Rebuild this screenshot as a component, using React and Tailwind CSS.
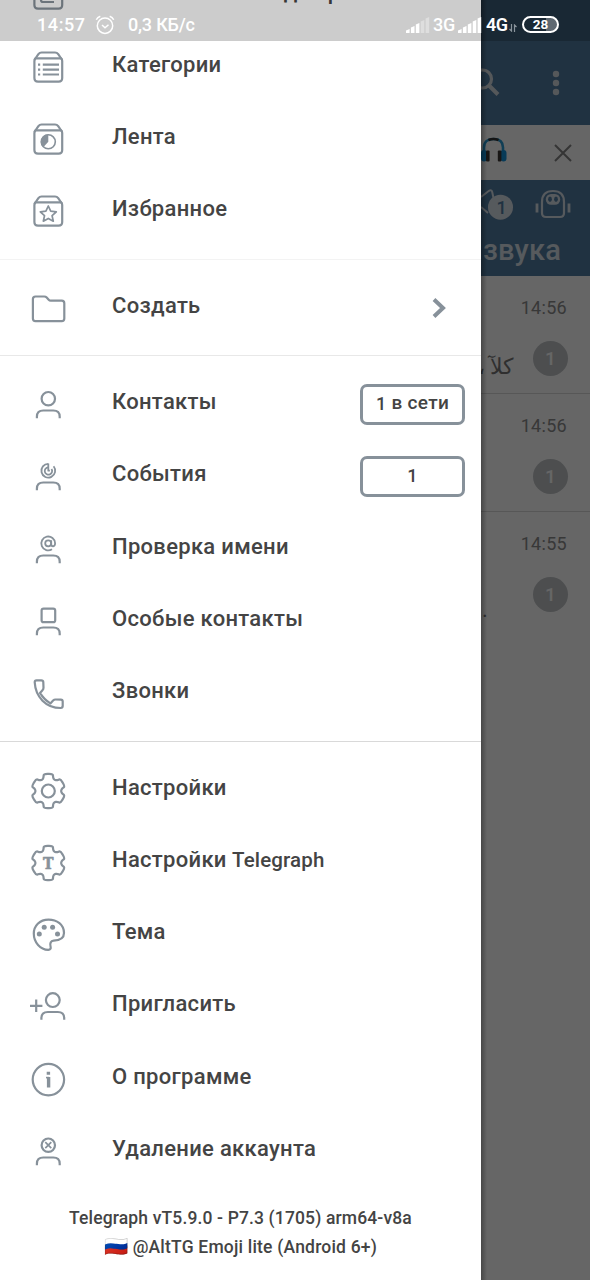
import React from 'react';

// rounded closed outline with six teeth, used by both settings icons
const gearPath = (() => {
  const pts = [];
  for (let i = 0; i < 6; i++) {
    const tip = i % 3 === 0 ? 17.8 : 17.2;
    [[-15, tip], [15, tip], [20, 14], [30, 12.6], [40, 14]].forEach(([deg, r]) => {
      const a = ((i * 60 + deg) * Math.PI) / 180;
      pts.push([24.3 + r * Math.sin(a), 25 - r * Math.cos(a)]);
    });
  }
  const mix = (p, q, t) => `${(p[0] + (q[0] - p[0]) * t).toFixed(2)} ${(p[1] + (q[1] - p[1]) * t).toFixed(2)}`;
  return (
    pts
      .map((p, i) => {
        const prev = pts[(i + pts.length - 1) % pts.length];
        const next = pts[(i + 1) % pts.length];
        return `${i === 0 ? 'M' : 'L'}${mix(p, prev, 0.42)} Q${p[0].toFixed(2)} ${p[1].toFixed(2)} ${mix(p, next, 0.42)}`;
      })
      .join(' ') + 'Z'
  );
})();

const Box = ({ children }) => (
  <>
    <path d="M10.400 17l4-5.800q1.200-1.700 3.200-1.700h13.400q2 0 3.200 1.700l4 5.800" />
    <path d="M11.500 15.300h25.600q1.100 1 1.100 2.700v17q0 3.600-3.600 3.600H14q-3.600 0-3.600-3.600V18q0-1.700 1.100-2.700z" />
    {children}
  </>
);

const Body = () => <path d="M12.900 38.200v-1.500q0-6.200 6.400-6.200h10q6.400 0 6.400 6.200v1.500" />;

const Dot = (props) => <circle className="fill-[#87919a] stroke-none" {...props} />;

const ICONS = {
  files: (
    <Box>
      <path d="M17 22v8q0 2 2 2h11M21 20h11v8H21z" />
    </Box>
  ),
  categories: (
    <Box>
      <path d="M14 21.700h2.200M18.800 21.700h16.200M14 26.600h2.200M18.800 26.600h16.200M14 31.500h2.200M18.800 31.500h16.200" />
    </Box>
  ),
  feed: (
    <Box>
      <circle cx="24.300" cy="26.800" r="7" strokeWidth="1.600" />
      <path className="fill-[#87919a] stroke-none" d="M24.300 26.800V19.500A7.300 7.300 0 0 0 19.300 32.200z" />
    </Box>
  ),
  favorites: (
    <Box>
      <path
        strokeWidth="1.700"
        strokeLinejoin="round"
        d="M24.300 19l2.400 5.200 5.600.6-4.200 3.900 1.200 5.500-5-2.800-5 2.800 1.200-5.500-4.200-3.900 5.600-.6z"
      />
    </Box>
  ),
  folder: (
    <path d="M11.500 12.500h8.700q1.500 0 2.500 1.100l2 2.200q.8.900 2 .9h11q2.600 0 2.600 2.600v15.200q0 2.600-2.600 2.600H11.500q-2.600 0-2.600-2.600V15.100q0-2.600 2.600-2.600z" />
  ),
  person: (
    <>
      <circle cx="24.300" cy="18.700" r="6.700" />
      <Body />
    </>
  ),
  events: (
    <>
      <g strokeWidth="1.800">
        <path d="M24.300 11.800A6.900 6.900 0 1 0 29.600 14.300" />
        <path d="M24.300 15.300A3.700 3.700 0 1 0 27.500 16.900" />
        <path d="M24.300 11.500v7.200h1.600" />
      </g>
      <Body />
    </>
  ),
  username: (
    <>
      <g strokeWidth="1.800">
        <circle cx="24.200" cy="18.300" r="3" />
        <path d="M27.200 15.300v4q0 2 1.900 2 2-.3 2-3A6.900 6.900 0 1 0 28 24.200" />
      </g>
      <Body />
    </>
  ),
  special: (
    <>
      <rect x="17.600" y="11.600" width="13.600" height="13.600" rx="2" />
      <Body />
    </>
  ),
  phone: (
    <path d="M12.500 11.300h4.800q1.900 0 2 1.800l.2 5.700q0 1.600-1.200 2.600l-2.300 2.500c3 5 6.200 8 10.400 10.500l2.700-2.900q1-1 2.400-1l5.300.1q1.900.1 1.900 2v4.500q0 1.900-2 1.900C22 39 11.500 28 10.700 13.300q0-2 1.800-2z" />
  ),
  settings: (
    <>
      <path d={gearPath} />
      <circle cx="24.300" cy="25" r="6.500" />
    </>
  ),
  telegraph: (
    <>
      <path d={gearPath} />
      <text
        x="24.300"
        y="31.300"
        textAnchor="middle"
        textLength="10.500"
        lengthAdjust="spacingAndGlyphs"
        strokeWidth="0.700"
        className="fill-[#87919a] font-['DejaVu_Serif',serif] text-[17.500px] font-bold"
      >
        T
      </text>
    </>
  ),
  theme: (
    <>
      <path d="M24.500 9.600C15.500 9.600 9.800 16 9.800 23.500c0 9 6.500 16 14.500 16.400 2 0 2.800-1.500 2.300-3.200-1-3.500.2-5.800 3-6 5.500-.3 10.400-1.500 10.400-7.700 0-8.400-7-13.400-15.500-13.400z" />
      <Dot cx="20.200" cy="17.300" r="2.500" />
      <Dot cx="28.600" cy="17.300" r="2.500" />
      <Dot cx="15.300" cy="24" r="2.500" />
      <Dot cx="33.500" cy="24" r="2.500" />
    </>
  ),
  invite: (
    <>
      <path d="M6 23.800h12.400M12.200 17.600v12.400" />
      <g transform="translate(4.500 -.5)">
        <circle cx="24.300" cy="18.600" r="6.900" />
        <Body />
      </g>
    </>
  ),
  info: (
    <>
      <circle cx="24.400" cy="24.600" r="15.700" />
      <path strokeWidth="3.400" d="M24.400 16.700v3M24.600 22v10.500" />
      <path strokeWidth="1.600" d="M22 22.600h3" />
    </>
  ),
  remove: (
    <>
      <circle cx="24.300" cy="18.200" r="6.700" />
      <path strokeWidth="1.700" d="M21.300 15.200l6 6M27.300 15.200l-6 6" />
      <Body />
    </>
  ),
};

const Row = ({ icon, label, latin, children }) => (
  <div className="flex h-[72.3px] items-center pl-6 pr-4">
    <svg
      viewBox="0 0 48 48"
      strokeWidth="2.200"
      strokeLinejoin="round"
      className="size-12 shrink-0 fill-none stroke-[#87919a]"
    >
      {ICONS[icon]}
    </svg>
    <span className="ml-10 flex-1 whitespace-nowrap pb-[5px] text-[22px] font-medium tracking-[0.3px]">
      {label}
      {latin && <span className="text-[20.5px] tracking-[0.15px]"> {latin}</span>}
    </span>
    {children}
  </div>
);

const Counter = ({ children }) => (
  <span className="flex h-[41px] w-[105px] items-center justify-center whitespace-pre rounded-[7px] border-3 border-[#87919a] pb-0.5 text-[19px] font-medium tracking-[0.3px]">
    <span className="text-[18px]">1</span>
    {children}
  </span>
);

const Divider = ({ color }) => (
  <div className="flex h-[24.1px] items-center">
    <div className={`h-px w-full ${color}`} />
  </div>
);

const Drawer = () => (
  <aside className="h-full w-[481px] shrink-0 overflow-hidden bg-white text-[#444]">
    <nav className="-mt-[41.800px]">
      <Row icon="files" label="Файловый менеджер" />
      <Row icon="categories" label="Категории" />
      <Row icon="feed" label="Лента" />
      <Row icon="favorites" label="Избранное" />
      <Divider color="bg-[#f3f3f3]" />
      <Row icon="folder" label="Создать">
        <svg viewBox="0 0 14 20" className="mr-[19px] h-5 w-3.5 fill-none stroke-[#87919a]" strokeWidth="4">
          <path d="M2 1.500l9 8.500-9 8.500" />
        </svg>
      </Row>
      <Divider color="bg-[#e8e8e8]" />
      <Row icon="person" label="Контакты">
        <Counter> в сети</Counter>
      </Row>
      <Row icon="events" label="События">
        <Counter />
      </Row>
      <Row icon="username" label="Проверка имени" />
      <Row icon="special" label="Особые контакты" />
      <Row icon="phone" label="Звонки" />
      <Divider color="bg-[#d9d9d9]" />
      <Row icon="settings" label="Настройки" />
      <Row icon="telegraph" label="Настройки" latin="Telegraph" />
      <Row icon="theme" label="Тема" />
      <Row icon="invite" label="Пригласить" />
      <Row icon="info" label="О программе" />
      <Row icon="remove" label="Удаление аккаунта" />
    </nav>
    <footer className="pt-[17px] text-center text-[17.5px] font-medium leading-[29px] tracking-[0.14px]">
      <p>Telegraph vT5.9.0 - P7.3 (1705) arm64-v8a</p>
      <p className="tracking-[0.2px]">
        <span className="text-[19.500px] leading-none">🇷🇺</span> @AltTG Emoji lite (Android 6+)
      </p>
    </footer>
  </aside>
);

const Chat = ({ time, children }) => (
  <div className="flex h-[118px] flex-col border-b border-[#d9d9d9] pr-[22px] pt-5 last:border-0">
    <span className="self-end pr-px text-[18px] leading-6 tracking-[0.3px] text-[#8c8c8c]">{time}</span>
    <div className="mt-[21px] flex h-[35px] items-start">
      <div className="min-w-0 flex-1 whitespace-nowrap text-[22px] leading-8 text-[#777]">{children}</div>
      <span className="flex size-[35px] shrink-0 items-center justify-center rounded-full bg-[#c0c3c6] pt-0.5 text-[19px] font-medium text-white">
        1
      </span>
    </div>
  </div>
);

const Chats = () => (
  <main className="relative h-full flex-1 overflow-hidden bg-white">
    <header className="flex h-[125px] items-start bg-[#527da3] pt-[68px]">
      <svg viewBox="0 0 20 30" className="h-[30px] w-5 fill-none stroke-[#d5dbe0]" strokeWidth="3.200">
        <circle cx="1.500" cy="11" r="9" />
        <path d="M8 17.500l9 9" strokeWidth="4" />
      </svg>
      <svg viewBox="0 0 8 28" className="ml-[51px] mt-px h-7 w-2 fill-[#d5dbe0]">
        <circle cx="4" cy="5" r="3.200" />
        <circle cx="4" cy="14" r="3.200" />
        <circle cx="4" cy="23" r="3.200" />
      </svg>
    </header>
    <div className="flex h-[55px] items-center justify-between pr-[18px]">
      <svg viewBox="0 0 26 28" className="mb-[5px] h-7 w-[26px] fill-none">
        <path d="M3 16V11.500q0-8.500 9.500-8.500t9.500 8.500V16" stroke="#2a9bd4" strokeWidth="2.600" />
        <path d="M7.500 4.200q5-2.400 10 0" stroke="#333" strokeWidth="2.600" />
        <rect x="0" y="14" width="6" height="11.500" rx="3" fill="#1593dc" />
        <rect x="19.500" y="14" width="6" height="11.500" rx="3" fill="#1593dc" />
        <rect x="5" y="14.500" width="3.600" height="11" rx="1" fill="#3c3836" />
        <rect x="16.800" y="14.500" width="3.600" height="11" rx="1" fill="#3c3836" />
      </svg>
      <svg viewBox="0 0 18 18" className="size-[18px] fill-none stroke-[#858585] stroke-2">
        <path d="M1 1l16 16M17 1L1 17" />
      </svg>
    </div>
    <div className="h-24 bg-[#527da3] pt-2 text-[#d8e0e8]">
      <div className="flex h-10 items-start">
        <svg viewBox="0 0 40 36" className="h-9 w-10 fill-none stroke-[#d8e0e8] stroke-2">
          <path d="M0 9l8-6.200q2.600-1.400 3.200 1.200l1.300 6M0 19l7 6" />
          <circle cx="19.500" cy="19.200" r="12.500" className="fill-[#d8e0e8] stroke-none" />
          <text x="20.500" y="26" textAnchor="middle" className="fill-[#527da3] stroke-none text-[18px] font-medium">
            1
          </text>
        </svg>
        <svg viewBox="0 0 36 32" className="ml-[14px] h-8 w-9 fill-none stroke-[#d8e0e8] stroke-[2.2px]">
          <path d="M7 14Q7 3 18 3t11 11v11q0 4-4 4H11q-4 0-4-4z" />
          <rect x="10.800" y="6" width="14.400" height="10.800" rx="5.200" className="fill-[#d8e0e8] stroke-none" />
          <ellipse cx="15" cy="11.300" rx="1.900" ry="2.700" className="fill-[#527da3] stroke-none" />
          <ellipse cx="21" cy="11.300" rx="1.900" ry="2.700" className="fill-[#527da3] stroke-none" />
          <path d="M2 15.500v9M34 15.500v9" strokeWidth="2.800" />
        </svg>
      </div>
      <div className="mt-1 pl-0.5 text-[29px] font-medium leading-9 tracking-[0.2px]">звука</div>
    </div>
    <section>
      <Chat time="14:56">
        <div dir="rtl" className="pr-5 pt-2.5">كلآ ،</div>
      </Chat>
      <Chat time="14:56" />
      <Chat time="14:55">
        <div className="pl-px pt-[17px]">.</div>
      </Chat>
    </section>
    {/* scrim and the drawer's shadow */}
    <div className="absolute inset-0 bg-black/60" />
    <div className="absolute inset-y-0 left-0 w-1.5 bg-linear-to-r from-black/30 to-transparent" />
  </main>
);

const Signal = ({ level }) => (
  <svg viewBox="0 0 24 16" className="h-4 w-6 fill-white">
    {[4, 7, 10, 13, 16].map((h, i) => (
      <path key={h} d={`M${i * 4.9} 16v${1.5 - h}l3.600-1.500V16z`} opacity={i < level ? 1 : 0.35} />
    ))}
  </svg>
);

const StatusBar = () => (
  <div className="absolute inset-x-0 top-0 flex h-[41px] items-center bg-black/20 pl-[37px] pt-2 text-[18px] font-medium text-white">
    <span className="w-[58px] tracking-[0.6px]">14:57</span>
    <svg viewBox="0 0 20 20" className="size-5 fill-none stroke-white" strokeWidth="1.500">
      <circle cx="10" cy="10.700" r="7.700" />
      <path d="M7 10l3 2.700 3.500-3M1.300 4.700q1.200-2.500 4-3.500M18.700 4.700q-1.200-2.500-4-3.500" />
    </svg>
    <span className="ml-[13px] w-[278px] tracking-[-0.2px]">0,3 КБ/с</span>
    <Signal level={3} />
    <span className="ml-[3px] w-[25px] tracking-[-0.3px]">3G</span>
    <Signal level={5} />
    <span className="ml-1 w-[23px] font-semibold tracking-[-0.5px]">4G</span>
    <svg viewBox="0 0 8 8" className="mr-[5px] mt-1.5 size-2 shrink-0 fill-none stroke-[#8a949c]" strokeWidth="1.200">
      <path d="M2.500 0v7L.5 5M5.500 8V1l2 2" />
    </svg>
    <span className="flex h-[17px] w-[37px] shrink-0 items-center justify-center rounded-full border-2 border-white bg-linear-to-r from-transparent from-68% to-white/30 to-68% text-[13.500px] font-bold leading-none">
      28
    </span>
  </div>
);

export default function App() {
  return (
    <div className="relative flex h-[1280px] w-[590px] overflow-hidden font-['Roboto','Noto_Sans',sans-serif]">
      <Drawer />
      <Chats />
      <StatusBar />
    </div>
  );
}
